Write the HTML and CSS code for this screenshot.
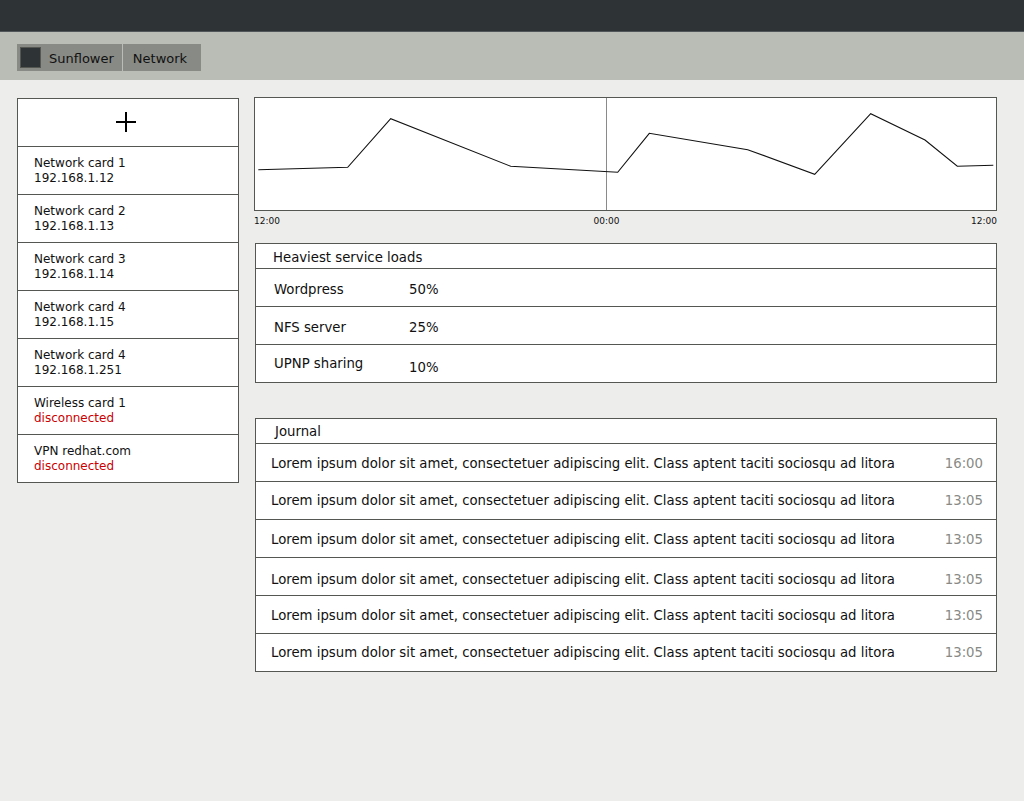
FILE: index.html
```html
<!DOCTYPE html>
<html>
<head>
<meta charset="utf-8">
<link rel="stylesheet" href="styles.css">
</head>
<body>
<div class="topbar"></div>
<div class="toolbar">
  <div class="tab"><span class="swatch"></span>Sunflower</div>
  <div class="tab tab-plain">Network</div>
</div>
<div class="main">
  <div class="cards">
    <div class="card add">
      <svg width="20" height="20" viewBox="0 0 20 20"><path d="M10 0v20M0 10h20" stroke="#000" stroke-width="2"/></svg>
    </div>
    <div class="card"><div>Network card 1</div><div>192.168.1.12</div></div>
    <div class="card"><div>Network card 2</div><div>192.168.1.13</div></div>
    <div class="card"><div>Network card 3</div><div>192.168.1.14</div></div>
    <div class="card"><div>Network card 4</div><div>192.168.1.15</div></div>
    <div class="card"><div>Network card 4</div><div>192.168.1.251</div></div>
    <div class="card"><div>Wireless card 1</div><div class="bad">disconnected</div></div>
    <div class="card"><div>VPN redhat.com</div><div class="bad">disconnected</div></div>
  </div>
  <div class="right">
    <div class="chart">
      <svg width="741" height="112" viewBox="0 0 741 112">
        <line x1="351.5" y1="0" x2="351.5" y2="112" stroke="#8a8a8a" stroke-width="1"/>
        <polyline fill="none" stroke="#111" stroke-width="1.1" points="3.3,71.7 92.7,69.3 135.7,20.7 255.7,68.3 362.7,74.3 394.3,35.3 492.7,51.7 559.7,76.3 615.7,15.7 670,42 702.3,68.3 738.3,67.3"/>
      </svg>
    </div>
    <div class="axis">
      <div class="axis-left"><span>12:00</span><span>00:00</span><span></span></div>
      <span>12:00</span>
    </div>
    <div class="table services">
      <div class="thead">Heaviest service loads</div>
      <div class="srow"><span class="sname">Wordpress</span><span>50%</span></div>
      <div class="srow"><span class="sname">NFS server</span><span>25%</span></div>
      <div class="srow srow-last"><span class="sname">UPNP sharing</span><span class="lowpct">10%</span></div>
    </div>
    <div class="table journal">
      <div class="thead jhead">Journal</div>
      <div class="jrow"><span>Lorem ipsum dolor sit amet, consectetuer adipiscing elit. Class aptent taciti sociosqu ad litora</span><span class="time">16:00</span></div>
      <div class="jrow jrow-high"><span>Lorem ipsum dolor sit amet, consectetuer adipiscing elit. Class aptent taciti sociosqu ad litora</span><span class="time">13:05</span></div>
      <div class="jrow"><span>Lorem ipsum dolor sit amet, consectetuer adipiscing elit. Class aptent taciti sociosqu ad litora</span><span class="time">13:05</span></div>
      <div class="jrow jrow-low"><span>Lorem ipsum dolor sit amet, consectetuer adipiscing elit. Class aptent taciti sociosqu ad litora</span><span class="time">13:05</span></div>
      <div class="jrow"><span>Lorem ipsum dolor sit amet, consectetuer adipiscing elit. Class aptent taciti sociosqu ad litora</span><span class="time">13:05</span></div>
      <div class="jrow jrow-high"><span>Lorem ipsum dolor sit amet, consectetuer adipiscing elit. Class aptent taciti sociosqu ad litora</span><span class="time">13:05</span></div>
    </div>
  </div>
</div>
</body>
</html>
```
FILE: styles.css
```css
html, body {
  margin: 0;
  padding: 0;
}
body {
  background: #ededeb;
  font-family: "DejaVu Sans", sans-serif;
  color: #111;
  height: 801px;
}
.topbar {
  height: 31px;
  background: #2e3436;
  border-bottom: 1px solid #50565a;
}
.toolbar {
  height: 48px;
  background: #babdb6;
  box-sizing: border-box;
  padding: 12px 0 0 17px;
  display: flex;
  align-items: flex-start;
  gap: 1px;
}
.tab {
  height: 27px;
  background: #888a85;
  display: flex;
  align-items: center;
  font-size: 13px;
  color: #111;
  padding: 1px 8px 0 3px;
  box-sizing: border-box;
}
.tab-plain {
  padding: 1px 14px 0 10px;
}
.swatch {
  width: 19px;
  height: 19px;
  background: #2e3436;
  border: 1px solid #555753;
  margin-right: 8px;
  margin-top: -1px;
}
.main {
  display: grid;
  grid-template-columns: 222px 743px;
  column-gap: 15px;
  padding: 17px 0 0 17px;
  align-items: start;
}
.cards {
  margin-top: 1px;
  background: #fff;
  border: 1px solid #555753;
}
.card {
  height: 47px;
  border-top: 1px solid #555753;
  box-sizing: content-box;
  display: flex;
  flex-direction: column;
  justify-content: center;
  padding-left: 16px;
  font-size: 12px;
  line-height: 15px;
  color: #111;
}
.card:first-child {
  border-top: none;
}
.card.add {
  align-items: center;
  padding-left: 0;
  padding-right: 5px;
  padding-bottom: 1px;
  height: 46px;
}
.bad {
  color: #cc0000;
}
.chart {
  height: 112px;
  border: 1px solid #555753;
  background: #fff;
}
.chart svg {
  display: block;
}
.axis {
  display: flex;
  justify-content: space-between;
  font-size: 9px;
  height: 32px;
  padding-top: 5px;
  box-sizing: border-box;
  color: #111;
}
.axis-left {
  width: 705px;
  display: grid;
  grid-template-columns: 1fr auto 1fr;
}
.table {
  margin-left: 1px;
  background: #fff;
  border: 1px solid #555753;
}
.thead {
  height: 25px;
  border-bottom: 1px solid #555753;
  font-size: 13.28px;
  padding-left: 17px;
  display: flex;
  align-items: center;
  padding-top: 2px;
  box-sizing: border-box;
}
.jhead {
  padding-left: 19px;
  padding-top: 0;
}
.srow {
  height: 38px;
  border-top: 1px solid #555753;
  display: flex;
  align-items: center;
  padding: 3px 0 0 18px;
  box-sizing: border-box;
  font-size: 13.28px;
}
.srow:nth-child(2) {
  border-top: none;
  height: 37px;
}
.srow-last {
  padding-top: 0;
}
.sname {
  width: 135px;
}
.lowpct {
  position: relative;
  top: 4px;
}
.journal {
  margin-top: 35px;
}
.jrow {
  height: 38px;
  border-top: 1px solid #555753;
  box-sizing: border-box;
  display: flex;
  align-items: center;
  justify-content: space-between;
  padding: 2px 13px 0 15px;
  font-size: 13.28px;
}
.jrow:nth-child(2) {
  border-top: none;
  height: 37px;
}
.jrow-high {
  padding-top: 0;
}
.jrow-low {
  padding-top: 6px;
}
.time {
  color: #888a85;
}
```
